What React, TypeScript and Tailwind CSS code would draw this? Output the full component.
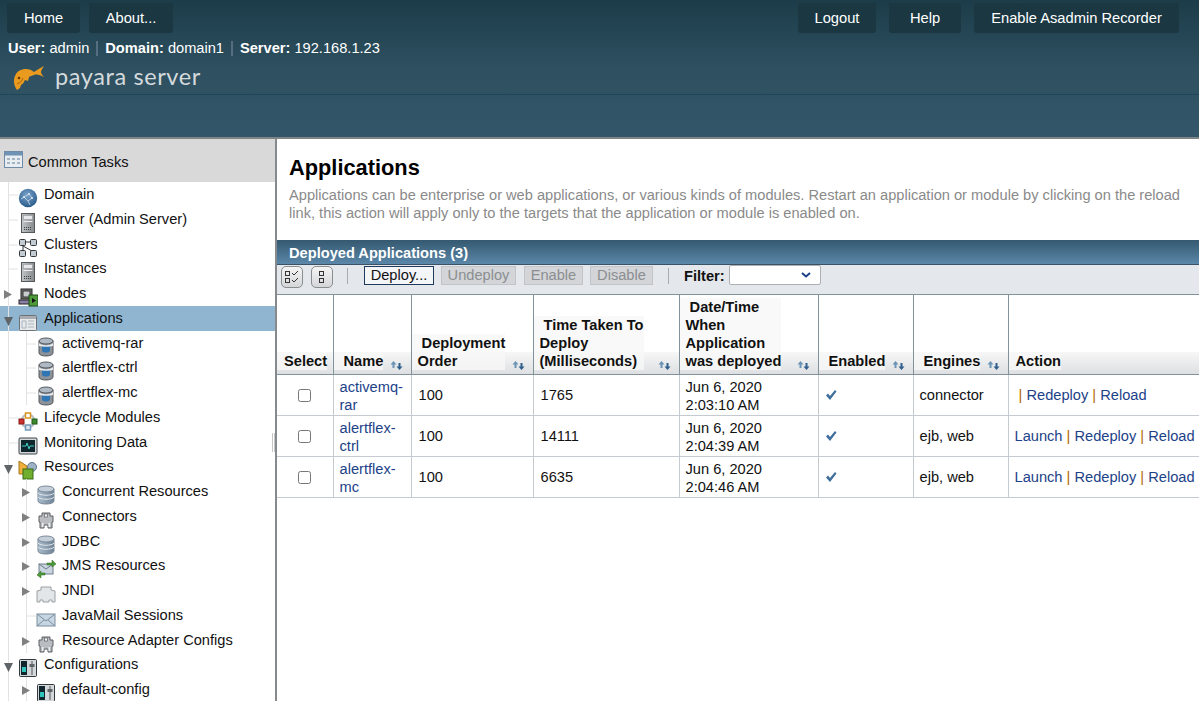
import type { ReactNode } from 'react';

const Globe = () => (
  <svg width="20" height="20" viewBox="0 0 20 20">
    <defs>
      <radialGradient id="globeFill" cx="45%" cy="35%" r="75%">
        <stop offset="0" stopColor="#7ba6cc" />
        <stop offset="1" stopColor="#1d4f80" />
      </radialGradient>
    </defs>
    <circle cx="10" cy="10" r="9.200" fill="url(#globeFill)" />
    <path d="M6 9l5-3 3 4-4 3-4-4zM10 13l2 4M6 9l-3 2" stroke="#b5cde2" strokeWidth="1" fill="none" />
    <circle cx="11" cy="6" r="1" fill="#dce8f2" />
    <circle cx="6" cy="9" r="1" fill="#dce8f2" />
    <circle cx="14" cy="10" r="1" fill="#dce8f2" />
  </svg>
);

const Server = () => (
  <svg width="20" height="20" viewBox="0 0 20 20">
    <defs>
      <linearGradient id="serverFill" x1="0" x2="1" y1="0" y2="0">
        <stop offset="0" stopColor="#c3c6c8" />
        <stop offset="1" stopColor="#85898c" />
      </linearGradient>
    </defs>
    <rect x="3.500" y=".5" width="13" height="19" fill="url(#serverFill)" stroke="#55595c" />
    <rect x="5.500" y="2.500" width="9" height="4" fill="#e6e8e9" stroke="#8b8f92" strokeWidth=".5" />
    <rect x="5.500" y="8" width="9" height="1" fill="#eceeef" />
    <path d="M6 14.500h8M6 16.500h8" stroke="#3f4244" strokeDasharray="1 1" />
  </svg>
);

const Clusters = () => (
  <svg width="20" height="20" viewBox="0 0 20 20">
    <g fill="#c3ccd3" stroke="#33383c">
      <rect x="1.500" y="1.500" width="6" height="6" rx="1" />
      <rect x="12.500" y="1.500" width="6" height="6" rx="1" />
      <rect x="1.500" y="12.500" width="6" height="6" rx="1" />
      <rect x="12.500" y="12.500" width="6" height="6" rx="1" />
    </g>
    <path d="M7 4h6M5 8l9 5M5 8v5" stroke="#33383c" fill="none" />
  </svg>
);

const Nodes = () => (
  <svg width="20" height="20" viewBox="0 0 20 20">
    <rect x="3" y="2" width="11" height="10" fill="#777" stroke="#222" />
    <rect x="5" y="4" width="7" height="6" fill="#c9cdd0" stroke="#333" />
    <rect x="1" y="13" width="11" height="4" fill="#8a7fa6" stroke="#222" />
    <rect x="11" y="8" width="9" height="11" fill="#4f9a3a" stroke="#1e4d18" />
    <path d="M14 11l4 2.500-4 2.500z" fill="#111" />
  </svg>
);

const AppWindow = () => (
  <svg width="20" height="20" viewBox="0 0 20 20">
    <rect x="1.500" y="3.500" width="17" height="15" rx="1" fill="#e8e9ea" stroke="#6d7276" />
    <rect x="2" y="4" width="16" height="3" fill="#a9adb1" />
    <path d="M4 9h4v7H4zM10 9h6M10 12h6M10 15h6" stroke="#a6b4bf" fill="none" />
  </svg>
);

const Jar = () => (
  <svg width="18" height="20" viewBox="0 0 18 20">
    <path d="M2 4v12c0 4 14 4 14 0V4z" fill="#8d9298" stroke="#54595e" />
    <ellipse cx="9" cy="4" rx="7" ry="3" fill="#aeb9c4" stroke="#54595e" />
    <path d="M5 9c2-1 6-1 8 0v5c-2 2-6 2-8 0z" fill="#2f76b4" />
    <path d="M2 6c3 3 11 3 14 0v3c-3 1-11 1-14 0z" fill="#e6e8ea" />
  </svg>
);

const Lifecycle = () => (
  <svg width="20" height="20" viewBox="0 0 20 20">
    <circle cx="10" cy="10" r="6.500" fill="none" stroke="#b3bcc4" strokeWidth="2" />
    <rect x="7.500" y="2" width="5" height="5" fill="#fff" stroke="#d8941c" strokeWidth="1.500" />
    <rect x="1" y="8" width="5" height="5" fill="#cf2e2e" stroke="#861818" />
    <rect x="14" y="8" width="5" height="5" fill="#3d8a2c" stroke="#1f5a16" />
    <rect x="7.500" y="14" width="5" height="5" fill="#dbe7f1" stroke="#7499bb" strokeWidth="1.500" />
  </svg>
);

const Monitor = () => (
  <svg width="20" height="20" viewBox="0 0 20 20">
    <rect x="1" y="2" width="18" height="16" rx="1" fill="#d5d8da" stroke="#3f4448" />
    <rect x="3" y="4" width="14" height="12" fill="#10272d" />
    <path d="M4 10h4l1-3 2 6 1-3h4" stroke="#3fd0c8" fill="none" />
  </svg>
);

const Resources = () => (
  <svg width="20" height="20" viewBox="0 0 20 20">
    <path d="M1 1l8 5v8H1z" fill="#efb13c" stroke="#a8761a" />
    <circle cx="14" cy="7" r="4.500" fill="#9db2c6" stroke="#60768a" />
    <rect x="5" y="9" width="10" height="10" fill="#6fae2f" stroke="#3a6a14" />
  </svg>
);

const Database = () => (
  <svg width="18" height="20" viewBox="0 0 18 20">
    <defs>
      <linearGradient id="dbFill" x1="0" x2="1" y1="0" y2="0">
        <stop offset="0" stopColor="#a9bbcc" />
        <stop offset="1" stopColor="#6f8396" />
      </linearGradient>
    </defs>
    <path d="M1 4v12c0 4 16 4 16 0V4z" fill="url(#dbFill)" stroke="#7b8a99" />
    <ellipse cx="9" cy="4" rx="8" ry="3" fill="#c4cfda" stroke="#7b8a99" />
    <path d="M1 8c2 3 14 3 16 0M1 12c2 3 14 3 16 0" stroke="#dfe6ec" fill="none" />
  </svg>
);

const Connector = () => (
  <svg width="18" height="20" viewBox="0 0 18 20">
    <path d="M5 6V3h8v3h3v6h-1v6h-4v-3H7v3H3v-6H2V6z" fill="#b9bdc1" stroke="#5b5f63" />
    <rect x="7.500" y="4" width="3" height="3" fill="#f2f3f4" stroke="#5b5f63" strokeWidth=".7" />
    <rect x="5" y="13" width="1.500" height="4" fill="#eef0f1" />
    <rect x="11.500" y="13" width="1.500" height="4" fill="#eef0f1" />
  </svg>
);

const Jms = () => (
  <svg width="20" height="20" viewBox="0 0 20 20">
    <rect x="3" y="5" width="14" height="10" fill="#c9d4de" stroke="#6d7d8c" />
    <path d="M3 5l7 5 7-5" stroke="#6d7d8c" fill="none" />
    <path d="M11 4h5V1l4 4-4 3V6h-5zM9 14H5v-2l-4 4 4 3v-3h4z" fill="#4f9a3a" stroke="#2c6a1e" strokeWidth=".5" />
  </svg>
);

const Jndi = () => (
  <svg width="20" height="20" viewBox="0 0 20 20">
    <path d="M1 18V7l4-1V3h10v3l4 1v11h-3v-2h-3v2H7v-2H4v2z" fill="#e3e6e8" stroke="#9ba0a4" />
  </svg>
);

const Mail = () => (
  <svg width="20" height="20" viewBox="0 0 20 20">
    <rect x="1" y="5" width="18" height="12" fill="#c7d6e3" stroke="#7d8d9b" />
    <path d="M1 5l9 7 9-7M1 17l7-6M19 17l-7-6" stroke="#7d8d9b" fill="none" />
  </svg>
);

const Config = () => (
  <svg width="20" height="20" viewBox="0 0 20 20">
    <rect x="1.500" y="1.500" width="17" height="17" rx="1" fill="#d5d8da" stroke="#33383c" />
    <rect x="3" y="3" width="6" height="14" fill="#11262c" />
    <rect x="4" y="9" width="4" height="5" fill="#2fc4bc" />
    <path d="M14 3v14" stroke="#555" />
    <rect x="11.500" y="6" width="5" height="3" fill="#5e6468" />
  </svg>
);

type SlotKind = 'line' | 'stub' | 'closed' | 'open' | 'empty';

const TreeSlot = ({ kind }: { kind: SlotKind }) => (
  <svg width="18" height="25" viewBox="0 0 18 25" className="shrink-0">
    {kind !== 'empty' && <path d="M8.500 0v25" stroke="#e2e2e2" />}
    {kind === 'stub' && <path d="M8 13h10" stroke="#e2e2e2" />}
    {kind === 'closed' && <path d="M4 9l8 4.500-8 4.500z" fill="#808080" />}
    {kind === 'open' && <path d="M4 11h9l-4.500 9z" fill="#5f6468" />}
  </svg>
);

type Item = {
  label: string;
  icon: ReactNode;
  slots: SlotKind[];
  selected?: boolean;
};

const treeItems: Item[] = [
  { label: 'Domain', icon: <Globe />, slots: ['stub'] },
  { label: 'server (Admin Server)', icon: <Server />, slots: ['stub'] },
  { label: 'Clusters', icon: <Clusters />, slots: ['stub'] },
  { label: 'Instances', icon: <Server />, slots: ['stub'] },
  { label: 'Nodes', icon: <Nodes />, slots: ['closed'] },
  { label: 'Applications', icon: <AppWindow />, slots: ['open'], selected: true },
  { label: 'activemq-rar', icon: <Jar />, slots: ['line', 'stub'] },
  { label: 'alertflex-ctrl', icon: <Jar />, slots: ['line', 'stub'] },
  { label: 'alertflex-mc', icon: <Jar />, slots: ['line', 'stub'] },
  { label: 'Lifecycle Modules', icon: <Lifecycle />, slots: ['stub'] },
  { label: 'Monitoring Data', icon: <Monitor />, slots: ['stub'] },
  { label: 'Resources', icon: <Resources />, slots: ['open'] },
  { label: 'Concurrent Resources', icon: <Database />, slots: ['line', 'closed'] },
  { label: 'Connectors', icon: <Connector />, slots: ['line', 'closed'] },
  { label: 'JDBC', icon: <Database />, slots: ['line', 'closed'] },
  { label: 'JMS Resources', icon: <Jms />, slots: ['line', 'closed'] },
  { label: 'JNDI', icon: <Jndi />, slots: ['line', 'closed'] },
  { label: 'JavaMail Sessions', icon: <Mail />, slots: ['line', 'stub'] },
  { label: 'Resource Adapter Configs', icon: <Connector />, slots: ['line', 'closed'] },
  { label: 'Configurations', icon: <Config />, slots: ['open'] },
  { label: 'default-config', icon: <Config />, slots: ['line', 'closed'] },
];

const SortIcon = () => (
  <svg width="13" height="9" viewBox="0 0 13 9" className="shrink-0">
    <path d="M3.500 0L6.500 3.500H4.500V7H2.500V3.500H0.500z" fill="#6a93b5" />
    <path d="M9.500 9L6.500 5.500H8.500V2H10.500V5.500H12.500z" fill="#2f5f8a" />
  </svg>
);

const Fish = () => (
  <svg width="30" height="24" viewBox="0 0 30 24">
    <path
      d="M3 24C0 20-1 14 1 10c2-5 6-7 11-7 3 0 6 1 8 3 3-2 6-4 10-6-2 3-3 5-3 6 0 1 1 3 3 5-4-2-7-3-10-2-1 0-3 1-5 2l-1 4-3-1c-1 2-2 4-4 5l-1 3z"
      fill="#ea9a1f"
    />
    <circle cx="5" cy="12" r="1.300" fill="#6b3e06" />
    <path d="M3 18c3-1 5-3 6-6" stroke="#a9660e" fill="none" />
  </svg>
);

const TopButton = ({ label, className }: { label: string; className: string }) => (
  <div className={`flex h-[30px] items-center justify-center rounded-b-[3px] bg-[#1b3742] text-[14.7px] text-white ${className}`}>
    {label}
  </div>
);

const ToolButton = ({ label, className }: { label: string; className: string }) => (
  <div className={`flex h-[19px] items-center justify-center border border-[#c2c5c8] bg-[#d3d5d8] text-[#8b8e91] ${className}`}>
    {label}
  </div>
);

const ToolSeparator = () => <div className="mt-[2px] h-[16px] w-px bg-[#a9adb0]" />;

const TableIcon = ({ children, className }: { children: ReactNode; className: string }) => (
  <div className={`flex h-[22px] items-center justify-center rounded-[5px] border border-[#8a8d90] bg-gradient-to-b from-[#f5f5f5] to-[#d5d6d8] ${className}`}>
    {children}
  </div>
);

const columns = [
  { width: 'w-[56px]', lines: ['Select'], sort: false, plain: true },
  { width: 'w-[78px]', lines: ['Name'], sort: true, indent: true },
  { width: 'w-[122px]', lines: ['\u00a0Deployment', 'Order'], sort: true },
  { width: 'w-[146px]', lines: ['\u00a0Time Taken To', 'Deploy', '(Milliseconds)'], sort: true },
  { width: 'w-[139px]', lines: ['\u00a0Date/Time', 'When', 'Application', 'was deployed'], sort: true },
  { width: 'w-[95px]', lines: ['Enabled'], sort: true, indent: true },
  { width: 'w-[95px]', lines: ['Engines'], sort: true, indent: true },
  { width: 'w-[191px]', lines: ['Action'], sort: false, plain: true },
];

const rows = [
  { name: ['activemq-', 'rar'], order: '100', time: '1765', date: ['Jun 6, 2020', '2:03:10 AM'], engines: 'connector', launch: false },
  { name: ['alertflex-', 'ctrl'], order: '100', time: '14111', date: ['Jun 6, 2020', '2:04:39 AM'], engines: 'ejb, web', launch: true },
  { name: ['alertflex-', 'mc'], order: '100', time: '6635', date: ['Jun 6, 2020', '2:04:46 AM'], engines: 'ejb, web', launch: true },
];

const LinkText = ({ children }: { children: ReactNode }) => <span className="text-[#1c4288]">{children}</span>;
const Pipe = () => <span className="text-[#b06a00]">|</span>;

export default function App() {
  return (
    <div className="h-[701px] w-[1199px] overflow-hidden bg-white font-['Liberation_Sans',Arial,sans-serif] text-[14.63px] text-[#111]">
      <header className="h-[137px] bg-gradient-to-b from-[#1c3c49] via-[#2e5060] via-[50%] to-[#33566a]">
        <div className="flex pt-[3px]">
          <div className="flex gap-[9px] pl-[7px]">
            <TopButton label="Home" className="w-[73px]" />
            <TopButton label="About..." className="w-[84px]" />
          </div>
          <div className="ml-auto flex gap-[13px] pr-[20px]">
            <TopButton label="Logout" className="w-[78px]" />
            <TopButton label="Help" className="w-[72px]" />
            <TopButton label="Enable Asadmin Recorder" className="w-[205px]" />
          </div>
        </div>
        <div className="flex h-[31px] items-center pl-[8px] text-white">
          <b>User:</b>&nbsp;admin
          <span className="mx-[7px] h-[15px] w-[2px] bg-[#566f80]" />
          <b>Domain:</b>&nbsp;domain1
          <span className="mx-[7px] h-[15px] w-[2px] bg-[#566f80]" />
          <b>Server:</b>&nbsp;192.168.1.23
        </div>
        <div className="flex h-[28px] items-center pl-[14px]">
          <Fish />
          <span className="ml-[11px] -mt-[3px] font-['Lato',sans-serif] text-[23.5px] tracking-[0.6px] text-[#d5dadd]">payara server</span>
        </div>
        <div className="mt-[2px] h-px bg-[#1e4658]" />
      </header>
      <div className="h-[2px] bg-[#7f8487]" />
      <div className="flex h-[562px]">
        <aside className="relative w-[277px] shrink-0 overflow-hidden border-r-2 border-[#868a8d]">
          <div className="flex h-[43px] items-center gap-[5px] bg-[#d9d9d9] pl-[4px]">
            <svg width="19" height="17" viewBox="0 0 19 17" className="-mt-[3px]">
              <rect x=".5" y=".5" width="18" height="16" fill="#e8edf2" stroke="#6f8ba6" />
              <rect x="1" y="1" width="17" height="3.500" fill="#6f93b5" />
              <path d="M3 7h3v2H3zM8 7h3v2H8zM13 7h3v2h-3zM3 11h3v2H3zM8 11h3v2H8zM13 11h3v2h-3z" fill="#a3b4c4" />
            </svg>
            <span className="pt-[4px]">Common Tasks</span>
          </div>
          {treeItems.map((item) => (
            <div key={item.label} className={`flex h-[24.75px] ${item.selected ? 'bg-[#8fb5d0]' : ''}`}>
              {item.slots.map((slot, i) => (
                <TreeSlot key={i} kind={slot} />
              ))}
              <div className="mt-[6px] flex h-[20px] w-[20px] shrink-0 justify-center">{item.icon}</div>
              <span className="ml-[6px] whitespace-nowrap pt-[2px]">{item.label}</span>
            </div>
          ))}
          <div className="absolute right-[0px] top-[294px] h-[19px] w-[3px] border-x border-[#c4c6c8]" />
        </aside>
        <main className="min-w-0 flex-1">
          <h1 className="pl-[12px] pt-[15px] text-[21.8px] font-bold leading-[27px] text-black">Applications</h1>
          <p className="mt-[5px] pl-[12px] pr-[16px] leading-[18px] text-[#8a8a8a]">
            Applications can be enterprise or web applications, or various kinds of modules. Restart an application or module by clicking on the reload link, this action will apply only to the targets that the application or module is enabled on.
          </p>
          <div className="mt-[18px] flex h-[24px] items-center bg-gradient-to-b from-[#355970] to-[#5b87a9] pl-[12px] pt-[3px] font-bold text-white">
            Deployed Applications (3)
          </div>
          <div className="flex h-[30px] items-start border-t border-[#3a5266] bg-[#e4e7eb] pl-[4px] pt-[1px]">
            <TableIcon className="w-[22px]">
              <svg width="16" height="14" viewBox="0 0 16 14" fill="none" stroke="#333">
                <rect x="1.500" y="1.500" width="4" height="4" />
                <rect x="1.500" y="8.500" width="4" height="4" />
                <path d="M8 3l2 2 4-4M8 10l2 2 4-4" />
              </svg>
            </TableIcon>
            <TableIcon className="ml-[8px] w-[22px]">
              <svg width="8" height="14" viewBox="0 0 8 14" fill="none" stroke="#333">
                <rect x="1.500" y="1.500" width="4" height="4" />
                <rect x="1.500" y="8.500" width="4" height="4" />
              </svg>
            </TableIcon>
            <div className="ml-[14px]"><ToolSeparator /></div>
            <div className="ml-[16px] flex h-[19px] w-[70px] items-center justify-center border border-[#1f3a5f] bg-[#f3f5f7]">Deploy...</div>
            <ToolButton label="Undeploy" className="ml-[7px] w-[75px]" />
            <ToolButton label="Enable" className="ml-[8px] w-[59px]" />
            <ToolButton label="Disable" className="ml-[7px] w-[63px]" />
            <div className="ml-[15px]"><ToolSeparator /></div>
            <b className="ml-[15px] leading-[20px]">Filter:</b>
            <div className="-mt-[1px] ml-[4px] flex h-[20px] w-[92px] items-center justify-end rounded-[2px] border border-[#adb0b3] bg-white pr-[9px]">
              <svg width="10" height="6" viewBox="0 0 10 6" fill="none" stroke="#1c3f8c" strokeWidth="2">
                <path d="M1 1l4 3.500L9 1" />
              </svg>
            </div>
          </div>
          <table className="w-[922px] table-fixed border-collapse">
            <thead>
              <tr className="h-[80px] border-y border-[#82929b]">
                {columns.map((col) => (
                  <th
                    key={col.lines[0]}
                    className={`${col.width} border-l border-[#82929b] bg-[linear-gradient(#f7f7f7,#dddfe2)] bg-[length:100%_22px] bg-bottom bg-no-repeat p-0 align-bottom first:border-l-0`}
                  >
                    <div className="flex items-end justify-between pb-[4px] text-left">
                      <div className={`bg-[#f8f8f8]/80 leading-[18px] ${col.plain ? 'pl-[7px]' : col.indent ? 'pl-[10px]' : 'pl-[6px]'}`}>
                        {col.lines.map((line) => (
                          <div key={line} className="whitespace-nowrap">{line}</div>
                        ))}
                      </div>
                      {col.sort && (
                        <div className="pr-[8px]"><SortIcon /></div>
                      )}
                    </div>
                  </th>
                ))}
              </tr>
            </thead>
            <tbody>
              {rows.map((row) => (
                <tr key={row.name.join('')} className="h-[41px] border-b border-[#c5cbd0]">
                  <td className="text-center align-middle">
                    <input type="checkbox" className="align-middle" />
                  </td>
                  <td className="border-l border-[#c5cbd0] pl-[6px] pt-[1px] leading-[18px]">
                    <LinkText>{row.name[0]}<br />{row.name[1]}</LinkText>
                  </td>
                  <td className="border-l border-[#c5cbd0] pl-[7px] pt-[2px]">{row.order}</td>
                  <td className="border-l border-[#c5cbd0] pl-[7px] pt-[2px]">{row.time}</td>
                  <td className="border-l border-[#c5cbd0] pl-[6px] pt-[1px] leading-[18px]">
                    {row.date[0]}<br />{row.date[1]}
                  </td>
                  <td className="border-l border-[#c5cbd0] pl-[6px]">
                    <svg width="12" height="12" viewBox="0 0 12 12" className="-mt-[1px]">
                      <path d="M1 6.500l2-2 2 2.500 5-6 1.500 1.500L5 11z" fill="#3e6f9c" />
                    </svg>
                  </td>
                  <td className="border-l border-[#c5cbd0] pl-[6px] pt-[2px]">{row.engines}</td>
                  <td className="whitespace-nowrap border-l border-[#c5cbd0] pl-[6px] pt-[2px]">
                    {row.launch ? <><LinkText>Launch</LinkText>{' '}</> : <>&nbsp;</>}
                    <Pipe />{' '}
                    <LinkText>Redeploy</LinkText>{' '}
                    <Pipe />{' '}
                    <LinkText>Reload</LinkText>
                  </td>
                </tr>
              ))}
            </tbody>
          </table>
        </main>
      </div>
    </div>
  );
}
